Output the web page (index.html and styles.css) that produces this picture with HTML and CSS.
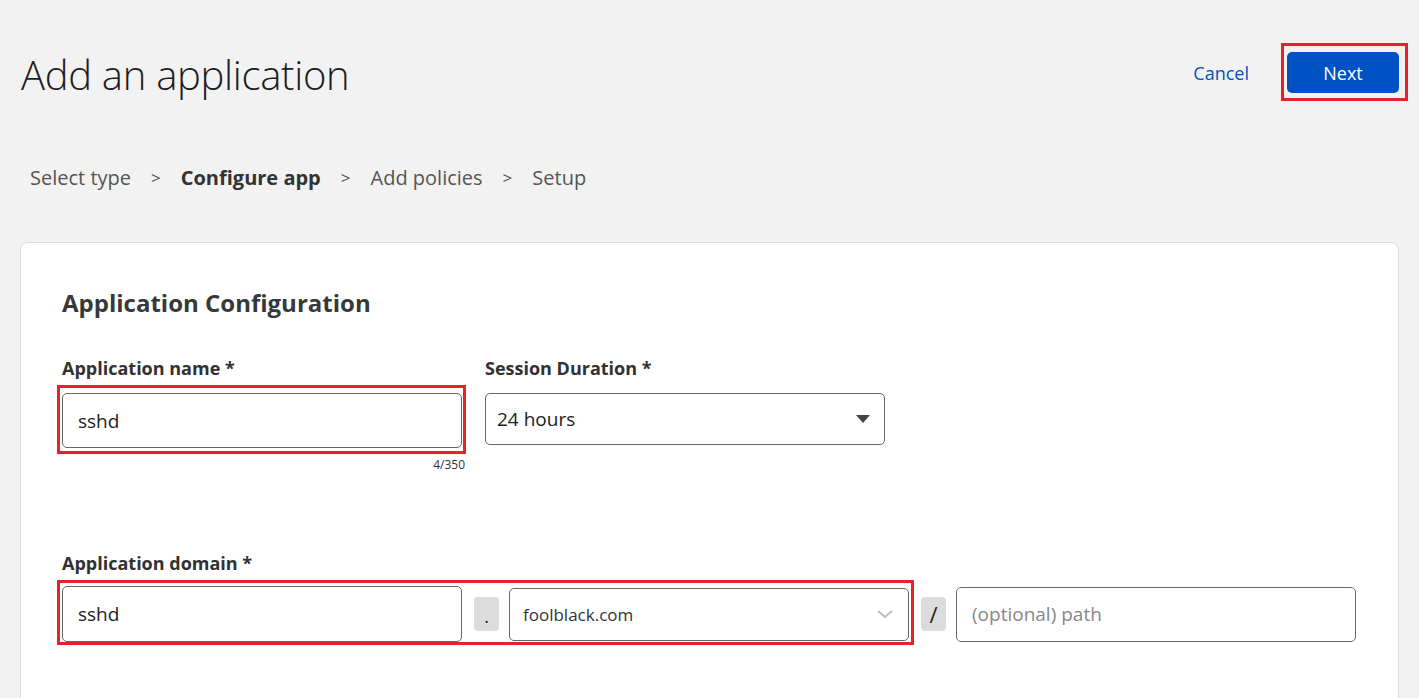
FILE: index.html
```html
<!DOCTYPE html>
<html lang="en">
<head>
    <meta charset="UTF-8">
    <meta name="viewport" content="width=device-width, initial-scale=1.0">
    <title>Add an application</title>
    <link rel="stylesheet" href="styles.css">
</head>
<body>

    <div class="page-header">
        <h1 class="page-title">Add an application</h1>
        <div class="header-actions">
            <a href="#" class="cancel-link">Cancel</a>
            <div class="mark mark-next">
                <button class="next-btn">Next</button>
            </div>
        </div>
    </div>

    <div class="steps">
        <span class="step">Select type</span>
        <span class="sep">&gt;</span>
        <span class="step active">Configure app</span>
        <span class="sep">&gt;</span>
        <span class="step">Add policies</span>
        <span class="sep">&gt;</span>
        <span class="step">Setup</span>
    </div>

    <div class="card">
        <h2 class="card-title">Application Configuration</h2>

        <div class="row">
            <div class="field">
                <label for="appName">Application name *</label>
                <div class="mark mark-name">
                    <input type="text" id="appName" class="text-input" value="sshd">
                </div>
                <div class="counter">4/350</div>
            </div>
            <div class="field">
                <label for="session">Session Duration *</label>
                <div class="select-box">
                    <span>24 hours</span>
                    <svg width="16" height="10" viewBox="0 0 16 10"><path d="M1 1 L15 1 L8 9 Z" fill="#444"/></svg>
                </div>
            </div>
        </div>

        <div class="field domain-field">
            <label>Application domain *</label>
            <div class="domain-row">
                <div class="mark mark-domain">
                    <input type="text" class="text-input" value="sshd">
                    <span class="joiner">.</span>
                    <div class="select-box light">
                        <span>foolblack.com</span>
                        <svg width="18" height="10" viewBox="0 0 18 10"><path d="M2 2 L9 8 L16 2" fill="none" stroke="#bdbdbd" stroke-width="2"/></svg>
                    </div>
                </div>
                <span class="joiner slash">/</span>
                <input type="text" class="text-input" placeholder="(optional) path">
            </div>
        </div>
    </div>

</body>
</html>
```

FILE: styles.css
```css
body {
    margin: 0;
    padding: 0 20px;
    background-color: #f2f2f2;
    font-family: "Open Sans", "Noto Sans", sans-serif;
    color: #333;
    overflow: hidden;
}

.page-header {
    display: flex;
    justify-content: space-between;
    align-items: center;
    padding-top: 47px;
}

.page-title {
    margin: 0 0 0 1px;
    font-size: 40px;
    font-weight: 300;
    color: #1d1d1d;
    letter-spacing: -0.3px;
}

.header-actions {
    display: flex;
    align-items: center;
    gap: 38px;
    margin-top: -4px;
}

.cancel-link {
    color: #0051c3;
    text-decoration: none;
    font-size: 18px;
}

.next-btn {
    display: block;
    width: 112px;
    height: 41px;
    background-color: #0051c3;
    color: #fff;
    border: none;
    border-radius: 5px;
    font-family: inherit;
    font-size: 18px;
}

/* red annotation boxes, negative margins keep the flow untouched */
.mark {
    border: 3px solid #e8202a;
}

.mark-next {
    padding: 6px 6px 5px 3px;
    margin: -9px -9px -8px -6px;
}

.mark-name {
    padding: 5px 1px 3px 2px;
    margin: -8px -4px -6px -5px;
}

.mark-domain {
    display: flex;
    align-items: center;
    gap: 12px;
    padding: 3px 2px 0 2px;
    margin: -6px -3px -3px -5px;
    flex-shrink: 0;
}

.steps {
    display: flex;
    align-items: center;
    gap: 20px;
    margin: 62px 0 0 10px;
    font-size: 20px;
    color: #555;
}

.step.active {
    font-weight: 700;
    color: #333;
}

.sep {
    font-size: 17px;
}

.card {
    margin-top: 51px;
    background: #fff;
    border: 1px solid #dcdcdc;
    border-radius: 8px;
    padding: 43px 41px 80px;
    height: 500px;
}

.card-title {
    margin: 0 0 37px;
    font-size: 24px;
    font-weight: 700;
    color: #36393a;
}

.row {
    display: flex;
    gap: 23px;
}

.field {
    display: flex;
    flex-direction: column;
}

.field label {
    font-size: 18px;
    font-weight: 700;
    color: #313131;
    margin-bottom: 13px;
}

.text-input {
    box-sizing: border-box;
    display: block;
    width: 400px;
    height: 55px;
    border: 1px solid #666;
    border-radius: 5px;
    padding: 0 15px;
    font-family: inherit;
    font-size: 19px;
    color: #222;
    background: #fff;
    flex-shrink: 0;
}

.text-input::placeholder {
    color: #888;
}

.counter {
    text-align: right;
    font-size: 12px;
    color: #333;
    margin: 8px -3px 0 0;
}

.select-box {
    box-sizing: border-box;
    width: 400px;
    height: 52px;
    border: 1px solid #666;
    border-radius: 5px;
    padding: 0 13px 0 11px;
    display: flex;
    justify-content: space-between;
    align-items: center;
    font-size: 19px;
    color: #222;
}

.domain-field {
    margin-top: 78px;
}

.domain-field label {
    margin-bottom: 11px;
}

.domain-row {
    display: flex;
    align-items: center;
    gap: 10px;
}

.mark-domain .text-input {
    height: 56px;
}

.joiner {
    width: 25px;
    height: 34px;
    background: #dcdcdc;
    border-radius: 4px;
    display: flex;
    align-items: center;
    justify-content: center;
    font-size: 18px;
    color: #222;
    padding-top: 4px;
    box-sizing: border-box;
    flex-shrink: 0;
}

.joiner.slash {
    font-size: 22px;
    padding-top: 0;
}

.select-box.light {
    height: 53px;
    font-size: 17px;
    color: #333;
    padding: 0 14px 0 13px;
    margin-left: -2px;
}
```
